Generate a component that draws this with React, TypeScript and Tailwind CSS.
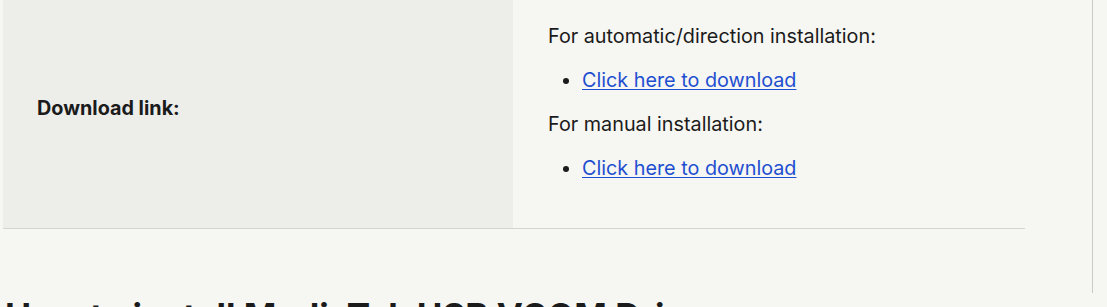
import React from "react";

const links = [
  { label: "For automatic/direction installation:", href: "#auto" },
  { label: "For manual installation:", href: "#manual" },
];

const App: React.FC = () => {
  return (
    <div className="h-[307px] w-full overflow-hidden bg-[#f6f6f2] font-['Inter','Liberation_Sans',sans-serif] text-[#1b1b1b]">
      <div className="w-[1093px] h-full border-r border-[#c9c9c6]">
        <div className="ml-[3px] w-[1022px] -mt-[14px] flex border-b border-[#d4d4d0]">
          <div className="w-[510px] shrink-0 bg-[#ededea] flex items-center px-[34px] pt-[2px]">
            <span className="text-[19.8px] leading-[26px] font-bold">Download link:</span>
          </div>
          <div className="flex-1 pl-[35px] pr-[34px] pt-[37px] pb-[47px] text-[19.8px] leading-[26px]">
            {links.map((item, i) => (
              <div key={item.href} className={i > 0 ? "mt-[18px]" : ""}>
                <p>{item.label}</p>
                <ul className="list-disc pl-[34px] mt-[18px]">
                  <li>
                    <a href={item.href} className="text-[#1f4fd1] underline underline-offset-2">
                      Click here to download
                    </a>
                  </li>
                </ul>
              </div>
            ))}
          </div>
        </div>
        <h2 className="ml-[5px] mt-[67px] text-[35px] leading-[40px] font-bold whitespace-nowrap text-[#1b1b1b]">
          How to install MediaTek USB VCOM Driver
        </h2>
      </div>
    </div>
  );
};

export default App;
